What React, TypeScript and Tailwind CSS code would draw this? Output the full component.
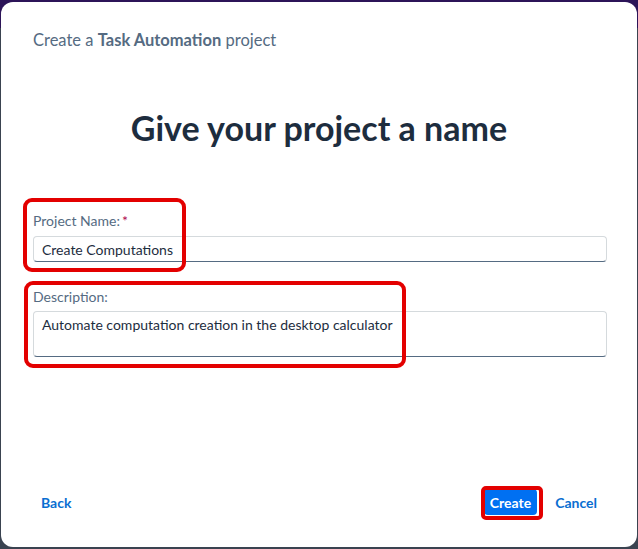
export default function App() {
  return (
    <div className="relative h-[549px] w-[638px] overflow-hidden bg-[linear-gradient(#2c1458_0,#2c1458_28px,#3a4350_28px)] pt-[2px] pl-[1px] pr-[1px] pb-[2px] font-['Lato','Liberation_Sans',sans-serif]">
      <div className="flex h-full flex-col rounded-[12px] bg-white">
        {/* header */}
        <div className="pl-[32px] pt-[29px] text-[16.5px] leading-[18px] text-[#556b82]">
          Create a <span className="font-bold">Task Automation</span> project
        </div>

        <h1 className="mt-[59px] text-center text-[34px] font-bold leading-[40px] text-[#1d2d3e]">
          Give your project a name
        </h1>

        {/* form */}
        <div className="mt-[64px] pl-[32px] pr-[30px]">
          <label className="block text-[14px] leading-[17px] text-[#556b82]">
            Project Name:<span className="ml-[2px] text-[#b00a4f]">*</span>
          </label>
          <div className="mt-[7px] flex h-[26px] items-center rounded-[4px] border border-[#d5dadd] border-b-[#556b82] px-[8px] text-[14px] text-[#1d2d3e]">
            Create Computations
          </div>

          <label className="mt-[26px] block text-[14px] leading-[17px] text-[#556b82]">
            Description:
          </label>
          <div className="mt-[6px] h-[46px] rounded-[4px] border border-[#d5dadd] border-b-[#556b82] px-[8px] pt-[4px] text-[14px] leading-[18px] text-[#1d2d3e]">
            Automate computation creation in the desktop calculator
          </div>
        </div>

        {/* footer */}
        <div className="mt-auto mb-[32px] flex items-center px-[40px]">
          <button className="text-[14px] font-bold text-[#0a6ed1]">Back</button>
          <div className="ml-auto flex items-center gap-[18px]">
            <button className="h-[26px] rounded-[4px] bg-[#0070f2] px-[6px] text-[14px] font-bold text-white">
              Create
            </button>
            <button className="text-[14px] font-bold text-[#0a6ed1]">Cancel</button>
          </div>
        </div>
      </div>

      {/* annotation boxes */}
      <div className="absolute left-[23px] top-[198px] h-[74px] w-[163px] rounded-[9px] border-4 border-[#e30000]" />
      <div className="absolute left-[24px] top-[281px] h-[87px] w-[382px] rounded-[9px] border-4 border-[#e30000]" />
      <div className="absolute left-[481px] top-[486px] h-[34px] w-[62px] rounded-[5px] border-4 border-[#e30000]" />
    </div>
  );
}
